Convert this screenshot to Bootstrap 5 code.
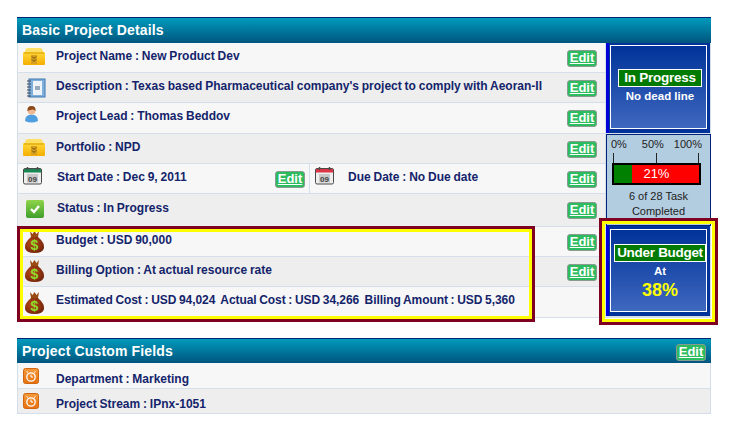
<!DOCTYPE html>
<html lang="en">
  <head>
    <meta charset="UTF-8" />
    <meta name="viewport" content="width=device-width, initial-scale=1.0" />
    <title>Project Details</title>
    <link href="https://cdn.jsdelivr.net/npm/bootstrap@5.3.3/dist/css/bootstrap.min.css" rel="stylesheet" />
    <script src="https://cdn.jsdelivr.net/npm/bootstrap@5.3.3/dist/js/bootstrap.bundle.min.js"></script>
    <style>
      body { background: #fff; font-family: "Liberation Sans", Arial, sans-serif; }
      .page-wrap { position: relative; width: 754px; height: 421px; padding: 17px 43px 0 17px; overflow: hidden; }
      .panel-head { height: 26px; padding: 2px 5px 0 5px; border-top: 1px solid #00237a; background: linear-gradient(#009abc, #00557e); color: #fff; font-size: 14px; font-weight: 700; line-height: 20px; letter-spacing: .15px; }
      .panel-head.second { height: 25px; margin-top: 20px; }
      .left-col { width: 588px; }
      .right-col { width: 106px; background: #d5deeb; }
      .info-row { padding-right: 8px; font-size: 12px; font-weight: 700; color: #14246b; word-spacing: -.5px; border-left: 1px solid #d5deeb; border-bottom: 1px solid #d5deeb; }
      .info-row:nth-child(odd) { background: #f7f7f7; }
      .info-row:nth-child(even) { background: #eee; }
      .field-row { border-right: 1px solid #d5deeb; }
      .row-30 { height: 30px; }
      .row-31 { height: 31px; }
      .row-33 { height: 33px; }
      .row-26 { height: 26px; }
      .row-25 { height: 25px; }
      .ico-cell { width: 38px; flex: none; padding-left: 4px; }
      .ico-cell svg { display: block; }
      .row-text { flex-grow: 1; padding-top: 6px; white-space: nowrap; line-height: 15px; }
      .row-text.nudge-x { padding-left: 1px; }
      .row-text.nudge-y { padding-top: 7px; }
      .row-text.nudge-y2 { padding-top: 8px; }
      .row-text.nudge-y3 { padding-top: 9px; }
      .row-text.tight { letter-spacing: -.08px; }
      .row-btn { flex: none; padding-top: 7px; }
      .row-btn.low { padding-top: 8px; }
      .edit-btn { display: block; width: 30px; height: 17px; padding: 0; background: #2cbb5e; border: 1px solid #8a9a90; border-radius: 3px; color: #fff; font-size: 13px; font-weight: 700; line-height: 14px; text-align: center; text-decoration: underline; }
      .date-split { width: 292px; border-right: 1px solid #d5deeb; padding-right: 4px; }
      .custom-edit { position: absolute; top: 6px; right: 5px; }
      .ic-box { width: 24px; height: 19px; margin-top: 4px; }
      .ic-note { width: 20px; height: 20px; margin: 5px 0 0 4px; }
      .ic-user { width: 15px; height: 18px; margin: 2px 0 0 2px; }
      .ic-cal { width: 21px; height: 19px; margin-top: 2px; }
      .ic-ok { width: 20px; height: 20px; margin: 5px 0 0 3px; }
      .ic-bag { width: 21px; height: 24px; margin-left: 2px; }
      .ic-bag.up { margin-top: 2px; }
      .ic-bag.mid { margin-top: 3px; }
      .ic-bag.down { margin-top: 4px; }
      .ic-clock { width: 16px; height: 16px; margin: 5px 0 0 1px; }
      .ic-clock.up { margin-top: 4px; }
      .status-box { width: 104px; height: 90px; margin: 0 0 1px 1px; padding: 2px 3px 4px 4px; background: #003399; box-shadow: inset 3px 0 0 #0000d8; color: #fff; text-align: center; font-weight: 700; }
      .status-box.budget { padding-top: 3px; margin-bottom: 0; }
      .status-inner { height: 100%; border: 1px solid #fff; background: linear-gradient(#003399, #3f68bf); display: flex; flex-direction: column; align-items: center; padding: 23px 0 0 3px; }
      .status-tag { background: #007a00; border: 1px solid #fff; font-size: 13.5px; letter-spacing: -.25px; line-height: 16px; height: 18px; padding: 0 5px; white-space: nowrap; }
      .status-sub { font-size: 11.5px; line-height: 14px; margin-top: 2px; }
      .budget-inner { padding-top: 14px; }
      .budget-inner .status-tag { padding: 0 2px; letter-spacing: -.3px; }
      .budget-pct { color: #ff0; font-size: 18px; line-height: 22px; margin-top: 1px; }
      .progress-box { width: 105px; height: 92px; margin-left: 1px; background: #b3cde0; border: 1px solid #00237a; font-size: 11px; color: #222; text-align: center; line-height: 15px; }
      .scale-labels { display: flex; justify-content: space-between; padding: 2px 8px 0 4px; height: 18px; line-height: 14px; }
      .scale-labels span:nth-child(2) { margin-left: 5px; }
      .scale-ticks { display: flex; justify-content: space-between; height: 10px; padding: 0 11px 0 6px; }
      .scale-ticks i { width: 1px; background: #222; }
      .bar-track { display: flex; width: 89px; height: 22px; margin-left: 5px; border: 2px solid #000; background: #f00; color: #fff; font-size: 13px; line-height: 18px; }
      .bar-done { background: #008000; }
      .bar-label { flex-grow: 1; padding-right: 18px; }
      .bar-caption { margin-top: 4px; font-size: 11px; line-height: 15px; }
      .hl-frame { position: absolute; border: 3px solid #7f0020; box-shadow: inset 0 0 0 3px #ff0; pointer-events: none; }
      .hl-left { left: 17px; top: 226px; width: 518px; height: 96px; }
      .hl-right { left: 599px; top: 218px; width: 119px; height: 107px; }
    </style>
  </head>
  <body>
    <svg width="0" height="0" class="position-absolute">
      <defs>
        <linearGradient id="boxGrad" x1="0" y1="0" x2="0" y2="1"><stop offset="0" stop-color="#ffd93a" /><stop offset="1" stop-color="#f5ae00" /></linearGradient>
        <linearGradient id="okGrad" x1="0" y1="0" x2="0" y2="1"><stop offset="0" stop-color="#8fd44a" /><stop offset="1" stop-color="#3f9f2a" /></linearGradient>
        <linearGradient id="orGrad" x1="0" y1="0" x2="0" y2="1"><stop offset="0" stop-color="#f59a3c" /><stop offset="1" stop-color="#e6700f" /></linearGradient>
        <radialGradient id="bagGrad" cx=".4" cy=".4" r=".7"><stop offset="0" stop-color="#b8481a" /><stop offset="1" stop-color="#6e2208" /></radialGradient>
        <symbol id="i-box" viewBox="0 0 24 19">
          <path d="M3 5 Q3 1 6 1 H18 Q21 1 21 5 V6 H3 Z" fill="#ffe066" />
          <rect x="1" y="5" width="22" height="13" rx="1" fill="url(#boxGrad)" />
          <path d="M2 6 H22" stroke="#d89a00" />
          <rect x="9" y="8" width="6" height="9" fill="#d8a020" />
          <path d="M10 9.500 L12 11.500 L14 9.500 M10 12.500 L12 14.500 L14 12.500" stroke="#6b4a10" fill="none" />
        </symbol>
        <symbol id="i-note" viewBox="0 0 20 20">
          <rect x="3" y="1" width="16" height="18" fill="#7fb0dc" stroke="#3f78b0" />
          <rect x="7" y="3" width="9" height="14" fill="#eef4fa" />
          <rect x="9" y="8" width="5" height="4" fill="#9ab" />
          <path d="M1 3 H5 M1 6 H5 M1 9 H5 M1 12 H5 M1 15 H5 M1 18 H5" stroke="#445" stroke-width="1.2" />
        </symbol>
        <symbol id="i-user" viewBox="0 0 15 18">
          <path d="M1 16 Q1 9.500 7.500 9.500 Q14 9.500 14 16 Q7.500 19 1 16 Z" fill="#4f9fe0" />
          <circle cx="7.500" cy="5.500" r="4" fill="#f0b890" />
          <path d="M3.500 6 Q3 1 7.500 1 Q12 1 11.500 6 Q9.500 3 3.500 6 Z" fill="#8a4a1a" />
        </symbol>
        <symbol id="i-cal" viewBox="0 0 21 19">
          <rect x="1.500" y="2.500" width="18" height="15.500" rx="1.500" fill="#eee" stroke="#4a4a4a" />
          <rect x="2" y="3" width="17" height="3.500" fill="currentColor" />
          <path d="M5.500 1 V4 M15.500 1 V4" stroke="#4a4a4a" stroke-width="1.500" />
          <rect x="5" y="8" width="11" height="8.500" fill="#c8c8c8" />
          <text x="10.500" y="15.500" text-anchor="middle" font-family="Liberation Sans" font-weight="700" font-size="8" fill="#444">09</text>
        </symbol>
        <symbol id="i-ok" viewBox="0 0 20 20">
          <rect x="1" y="1" width="18" height="18" rx="2" fill="url(#okGrad)" />
          <path d="M6 10 L9 13 L14 7" stroke="#fff" stroke-width="2.4" fill="none" />
        </symbol>
        <symbol id="i-bag" viewBox="0 0 21 24">
          <path d="M6 1 L8.500 4 L10.500 1 L12.500 4 L15 1 L14 7 H7 Z" fill="#9a4a14" />
          <path d="M7 7 Q0 13 1 18 Q2 23 10.500 23 Q19 23 20 18 Q21 13 14 7 Z" fill="url(#bagGrad)" />
          <text x="10.500" y="20" text-anchor="middle" font-family="Liberation Sans" font-weight="700" font-size="14" fill="#8ddc2c">$</text>
        </symbol>
        <symbol id="i-clock" viewBox="0 0 16 16">
          <rect x=".5" y=".5" width="15" height="15" rx="2" fill="url(#orGrad)" stroke="#d0660f" />
          <circle cx="8" cy="9" r="4.200" fill="none" stroke="#fff" stroke-width="1.300" />
          <path d="M8 6.500 V9 H10 M3.500 3.500 L5 4.500 M12.500 3.500 L11 4.500" stroke="#fff" fill="none" />
        </symbol>
      </defs>
    </svg>

    <div class="page-wrap">
      <div class="panel-head">Basic Project Details</div>
      <div class="d-flex">
        <div class="left-col">
          <div class="info-row row-30 d-flex">
            <div class="ico-cell"><svg class="ic-box"><use href="#i-box" /></svg></div>
            <div class="row-text">Project Name : New Product Dev</div>
            <div class="row-btn"><a class="edit-btn" href="#">Edit</a></div>
          </div>
          <div class="info-row row-30 d-flex">
            <div class="ico-cell"><svg class="ic-note"><use href="#i-note" /></svg></div>
            <div class="row-text">Description : Texas based Pharmaceutical company's project to comply with Aeoran-II</div>
            <div class="row-btn"><a class="edit-btn" href="#">Edit</a></div>
          </div>
          <div class="info-row row-31 d-flex">
            <div class="ico-cell"><svg class="ic-user"><use href="#i-user" /></svg></div>
            <div class="row-text">Project Lead : Thomas Beddov</div>
            <div class="row-btn"><a class="edit-btn" href="#">Edit</a></div>
          </div>
          <div class="info-row row-30 d-flex">
            <div class="ico-cell"><svg class="ic-box"><use href="#i-box" /></svg></div>
            <div class="row-text">Portfolio : NPD</div>
            <div class="row-btn"><a class="edit-btn" href="#">Edit</a></div>
          </div>
          <div class="info-row row-30 d-flex">
            <div class="d-flex date-split">
              <div class="ico-cell"><svg class="ic-cal text-success"><use href="#i-cal" /></svg></div>
              <div class="row-text nudge-x">Start Date : Dec 9, 2011</div>
              <div class="row-btn"><a class="edit-btn" href="#">Edit</a></div>
            </div>
            <div class="ico-cell"><svg class="ic-cal text-danger"><use href="#i-cal" /></svg></div>
            <div class="row-text">Due Date : No Due date</div>
            <div class="row-btn"><a class="edit-btn" href="#">Edit</a></div>
          </div>
          <div class="info-row row-33 d-flex">
            <div class="ico-cell"><svg class="ic-ok"><use href="#i-ok" /></svg></div>
            <div class="row-text nudge-x nudge-y">Status : In Progress</div>
            <div class="row-btn low"><a class="edit-btn" href="#">Edit</a></div>
          </div>
          <div class="info-row row-30 d-flex">
            <div class="ico-cell"><svg class="ic-bag mid"><use href="#i-bag" /></svg></div>
            <div class="row-text">Budget : USD 90,000</div>
            <div class="row-btn"><a class="edit-btn" href="#">Edit</a></div>
          </div>
          <div class="info-row row-30 d-flex">
            <div class="ico-cell"><svg class="ic-bag up"><use href="#i-bag" /></svg></div>
            <div class="row-text">Billing Option : At actual resource rate</div>
            <div class="row-btn"><a class="edit-btn" href="#">Edit</a></div>
          </div>
          <div class="info-row row-31 d-flex">
            <div class="ico-cell"><svg class="ic-bag down"><use href="#i-bag" /></svg></div>
            <div class="row-text tight">Estimated Cost : USD 94,024&nbsp; Actual Cost : USD 34,266&nbsp; Billing Amount : USD 5,360</div>
          </div>
        </div>
        <div class="right-col">
          <div class="status-box">
            <div class="status-inner">
              <div class="status-tag">In Progress</div>
              <div class="status-sub">No dead line</div>
            </div>
          </div>
          <div class="progress-box">
            <div class="scale-labels"><span>0%</span><span>50%</span><span>100%</span></div>
            <div class="scale-ticks"><i></i><i></i><i></i></div>
            <div class="bar-track">
              <div class="bar-done" style="width: 21%"></div>
              <div class="bar-label">21%</div>
            </div>
            <div class="bar-caption">6 of 28 Task<br />Completed</div>
          </div>
          <div class="status-box budget">
            <div class="status-inner budget-inner">
              <div class="status-tag">Under Budget</div>
              <div class="status-sub">At</div>
              <div class="budget-pct">38%</div>
            </div>
          </div>
        </div>
      </div>

      <div class="position-relative">
        <div class="panel-head second">Project Custom Fields</div>
        <a class="edit-btn custom-edit" href="#">Edit</a>
      </div>
      <div>
        <div class="info-row field-row row-26 d-flex">
          <div class="ico-cell"><svg class="ic-clock"><use href="#i-clock" /></svg></div>
          <div class="row-text nudge-y3">Department : Marketing</div>
        </div>
        <div class="info-row field-row row-25 d-flex">
          <div class="ico-cell"><svg class="ic-clock up"><use href="#i-clock" /></svg></div>
          <div class="row-text nudge-y2">Project Stream : IPnx-1051</div>
        </div>
      </div>

      <div class="hl-frame hl-left"></div>
      <div class="hl-frame hl-right"></div>
    </div>
  </body>
</html>
